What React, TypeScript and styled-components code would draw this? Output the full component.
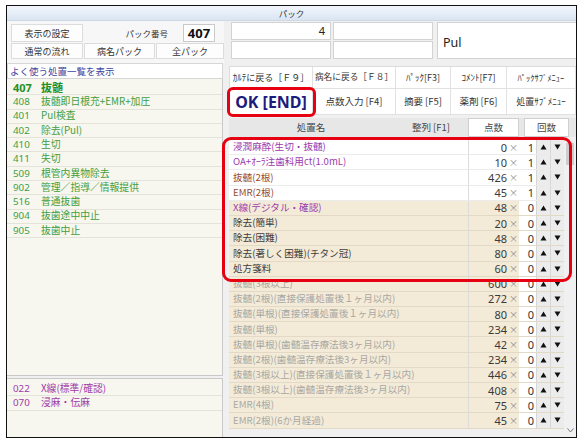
import React from 'react';
import styled, { createGlobalStyle, css } from 'styled-components';

type Tone = 'purple' | 'brown' | 'dark' | 'muted';

interface Treatment {
    name: string;
    points: number;
    count: number;
    tone: Tone;
    plain?: boolean;
}

const packItems = [
    { code: '408', name: '抜髄即日根充+EMR+加圧' },
    { code: '401', name: 'Pul検査' },
    { code: '402', name: '除去(Pul)' },
    { code: '410', name: '生切' },
    { code: '411', name: '失切' },
    { code: '509', name: '根管内異物除去' },
    { code: '902', name: '管理／指導／情報提供' },
    { code: '516', name: '普通抜歯' },
    { code: '904', name: '抜歯途中中止' },
    { code: '905', name: '抜歯中止' },
];

const subItems = [
    { code: '022', name: 'X線(標準/確認)' },
    { code: '070', name: '浸麻・伝麻' },
];

const picked: Treatment[] = [
    { name: '浸潤麻酔(生切・抜髄)', points: 0, count: 1, tone: 'purple', plain: true },
    { name: 'OA+ｵｰﾗ注歯科用ct(1.0mL)', points: 10, count: 1, tone: 'purple', plain: true },
    { name: '抜髄(2根)', points: 426, count: 1, tone: 'brown', plain: true },
    { name: 'EMR(2根)', points: 45, count: 1, tone: 'brown', plain: true },
    { name: 'X線(デジタル・確認)', points: 48, count: 0, tone: 'purple' },
    { name: '除去(簡単)', points: 20, count: 0, tone: 'dark' },
    { name: '除去(困難)', points: 48, count: 0, tone: 'dark' },
    { name: '除去(著しく困難)(チタン冠)', points: 80, count: 0, tone: 'dark' },
    { name: '処方箋料', points: 60, count: 0, tone: 'dark' },
];

const others: Treatment[] = [
    { name: '抜髄(3根以上)', points: 600, count: 0, tone: 'muted' },
    { name: '抜髄(2根)(直接保護処置後１ヶ月以内)', points: 272, count: 0, tone: 'muted' },
    { name: '抜髄(単根)(直接保護処置後１ヶ月以内)', points: 80, count: 0, tone: 'muted' },
    { name: '抜髄(単根)', points: 234, count: 0, tone: 'muted' },
    { name: '抜髄(単根)(歯髄温存療法後3ヶ月以内)', points: 42, count: 0, tone: 'muted' },
    { name: '抜髄(2根)(歯髄温存療法後3ヶ月以内)', points: 234, count: 0, tone: 'muted' },
    { name: '抜髄(3根以上)(直接保護処置後１ヶ月以内)', points: 446, count: 0, tone: 'muted' },
    { name: '抜髄(3根以上)(歯髄温存療法後3ヶ月以内)', points: 408, count: 0, tone: 'muted' },
    { name: 'EMR(4根)', points: 75, count: 0, tone: 'muted' },
    { name: 'EMR(2根)(6か月経過)', points: 45, count: 0, tone: 'muted' },
];

const toneColor: Record<Tone, string> = {
    purple: '#9c3aab',
    brown: '#9a4a2c',
    dark: '#3c3c3c',
    muted: '#a9a7a2',
};

const Arrow: React.FC<{ up?: boolean }> = ({ up }) => (
    <svg width='7' height='6' viewBox='0 0 7 6'>
        <polygon points={up ? '3.5,0.5 6.5,5.5 0.5,5.5' : '0.5,0.5 6.5,0.5 3.5,5.5'} fill='#111' />
    </svg>
);

const TreatmentRow: React.FC<{ item: Treatment }> = ({ item }) => (
    <StyledRow $plain={item.plain}>
        <NameCell $tone={item.tone}>{item.name}</NameCell>
        <PointCell>{item.points}</PointCell>
        <TimesCell>×</TimesCell>
        <CountCell>{item.count}</CountCell>
        <StepButton><Arrow up /></StepButton>
        <StepButton><Arrow /></StepButton>
    </StyledRow>
);

const App: React.FC = () => {
    return (
        <>
            <GlobalStyle />
            <Frame>
                <TitleBar>パック</TitleBar>
                <Body>
                    <LeftPane>
                        <Settings>
                            <SettingsRow>
                                <PlainButton $width={72}>表示の設定</PlainButton>
                                <PackLabel>パック番号</PackLabel>
                                <PackNumber>407</PackNumber>
                            </SettingsRow>
                            <SettingsRow>
                                <PlainButton $width={72}>通常の流れ</PlainButton>
                                <PlainButton $width={71}>病名パック</PlainButton>
                                <PlainButton $width={68}>全パック</PlainButton>
                            </SettingsRow>
                        </Settings>
                        <FavLink>よく使う処置一覧を表示</FavLink>
                        <PackList>
                            <ListItem $lead>
                                <Code>407</Code>
                                <span>抜髄</span>
                            </ListItem>
                            {packItems.map(p => (
                                <ListItem key={p.code}>
                                    <Code>{p.code}</Code>
                                    <span>{p.name}</span>
                                </ListItem>
                            ))}
                        </PackList>
                        <SubList>
                            {subItems.map(p => (
                                <ListItem key={p.code} $purple>
                                    <Code>{p.code}</Code>
                                    <span>{p.name}</span>
                                </ListItem>
                            ))}
                        </SubList>
                    </LeftPane>

                    <RightPane>
                        <InfoRow>
                            <FieldGrid>
                                <Field>4</Field>
                                <Field />
                                <Field />
                                <Field />
                            </FieldGrid>
                            <NameField>Pul</NameField>
                        </InfoRow>

                        <ButtonGrid>
                            <ActionButton $size={9}>ｶﾙﾃに戻る［Ｆ９］</ActionButton>
                            <ActionButton $size={8.7}>病名に戻る［Ｆ８］</ActionButton>
                            <ActionButton $size={9}>ﾊﾟｯｸ[F3]</ActionButton>
                            <ActionButton $size={9}>ｺﾒﾝﾄ[F7]</ActionButton>
                            <ActionButton $size={8.5}>ﾊﾟｯｸｻﾌﾞﾒﾆｭｰ</ActionButton>
                            <OkButton>OK [END]</OkButton>
                            <ActionButton>点数入力 [F4]</ActionButton>
                            <ActionButton>摘要 [F5]</ActionButton>
                            <ActionButton>薬剤 [F6]</ActionButton>
                            <ActionButton $size={9}>処置ｻﾌﾞﾒﾆｭｰ</ActionButton>
                        </ButtonGrid>

                        <HeaderRow>
                            <HeadCell $width={164}>処置名</HeadCell>
                            <HeadCell $width={72} style={{ marginLeft: 2 }}>整列 [F1]</HeadCell>
                            <HeadBox $width={51} style={{ marginLeft: 1 }}>点数</HeadBox>
                            <HeadBox $width={45} style={{ marginLeft: 5 }}>回数</HeadBox>
                        </HeaderRow>

                        <TableArea>
                            <Rows>
                                <Highlight>
                                    {picked.map(t => <TreatmentRow key={t.name} item={t} />)}
                                </Highlight>
                                {others.map(t => <TreatmentRow key={t.name} item={t} />)}
                            </Rows>
                            <ScrollBar>
                                <Thumb />
                                <ScrollArrow>
                                    <svg width='7' height='5' viewBox='0 0 7 5'>
                                        <polyline points='0.5,0.5 3.5,4 6.5,0.5' fill='none' stroke='#777' strokeWidth='1' />
                                    </svg>
                                </ScrollArrow>
                            </ScrollBar>
                        </TableArea>
                    </RightPane>
                </Body>
            </Frame>
        </>
    );
};

export default App;

const GlobalStyle = createGlobalStyle`
    html, body {
        margin: 0;
        padding: 0;
        background: #fff;
    }
    body {
        font-family: "Noto Sans CJK JP", "Noto Sans", sans-serif;
        color: #333;
    }
    * {
        box-sizing: border-box;
    }
`;

const Frame = styled.div`
    margin: 5px 0 0 6px;
    width: 571px;
    height: 433px;
    border: 1px solid #111;
    background: #f0f0f0;
    display: flex;
    flex-direction: column;
`;

const TitleBar = styled.div`
    height: 15px;
    line-height: 15px;
    text-align: center;
    font-size: 8.5px;
    color: #333;
    background: linear-gradient(to bottom, #f2f6fb, #dae5f3);
    border-bottom: 1px solid #cfd9e6;
`;

const Body = styled.div`
    flex: 1;
    display: flex;
    min-height: 0;
`;

const LeftPane = styled.div`
    width: 217px;
    display: flex;
    flex-direction: column;
`;

const Settings = styled.div`
    height: 42px;
    padding: 3px 0 0 4px;
    display: flex;
    flex-direction: column;
    gap: 1px;
    background: #f7f7f7;
`;

const SettingsRow = styled.div`
    display: flex;
    align-items: center;
    gap: 1px;
    height: 18px;
    &:last-child {
        height: 16px;
    }
`;

const PlainButton = styled.div<{ $width: number }>`
    width: ${p => p.$width}px;
    height: 100%;
    display: flex;
    align-items: center;
    justify-content: center;
    background: #fdfdfd;
    border: 1px solid #dcdcdc;
    font-size: 9px;
    line-height: 1;
    color: #333;
    white-space: nowrap;
`;

const PackLabel = styled.div`
    margin-left: auto;
    font-size: 8.5px;
    line-height: 1;
    color: #333;
`;

const PackNumber = styled.div`
    margin: 0 9px 0 14px;
    width: 32px;
    height: 18px;
    display: flex;
    align-items: center;
    justify-content: center;
    background: #fff;
    border: 1px solid #c9c9c9;
    font-family: "Noto Sans", sans-serif;
    font-weight: 700;
    font-size: 13px;
    color: #111;
`;

const FavLink = styled.div`
    width: 216px;
    height: 16px;
    padding-left: 2px;
    line-height: 14px;
    font-size: 9.5px;
    color: #3b45a0;
    background: #fff;
    border: 1px solid #d6d6d6;
`;

const PackList = styled.div`
    width: 216px;
    height: 297px;
    padding-top: 2px;
    background: #f7f6ef;
    border-right: 1px solid #c9c9c9;
    border-bottom: 1px solid #c9c9c9;
`;

const SubList = styled.div`
    flex: 1;
    width: 216px;
    margin-top: 2px;
    padding-top: 3px;
    background: #f7f6ef;
    border-top: 1px solid #c9c9c9;
    border-right: 1px solid #c9c9c9;
`;

const ListItem = styled.div<{ $lead?: boolean; $purple?: boolean }>`
    height: 14.3px;
    display: flex;
    align-items: center;
    font-size: 9.8px;
    line-height: 1;
    color: ${p => (p.$purple ? '#a03ba9' : '#3f9e3f')};
    border-bottom: 1px solid #e4e3da;
    white-space: nowrap;
    ${p => p.$lead && css`
        font-size: 11px;
        font-weight: 700;
        color: #249024;
    `}
`;

const Code = styled.span`
    width: 34px;
    padding-left: 6px;
    font-family: "Noto Sans", sans-serif;
`;

const RightPane = styled.div`
    flex: 1;
    padding-left: 5px;
    display: flex;
    flex-direction: column;
    min-width: 0;
`;

const InfoRow = styled.div`
    margin: 1px 0 0 2px;
    height: 37px;
    display: flex;
`;

const FieldGrid = styled.div`
    display: grid;
    grid-template-columns: 100px 100px;
    grid-template-rows: 18px 18px;
    gap: 1px 2px;
`;

const Field = styled.div`
    background: #fff;
    border: 1px solid #d3d3d3;
    padding-right: 5px;
    text-align: right;
    font-family: "Noto Sans", sans-serif;
    font-size: 11px;
    line-height: 16px;
    color: #222;
`;

const NameField = styled.div`
    flex: 1;
    margin-left: 4px;
    display: flex;
    align-items: center;
    padding: 4px 0 0 5px;
    background: #fff;
    border: 1px solid #d3d3d3;
    border-right: none;
    font-family: "Noto Sans", sans-serif;
    font-size: 12.5px;
    color: #222;
`;

const ButtonGrid = styled.div`
    margin-top: 7px;
    display: grid;
    grid-template-columns: 83px 83px 55px 56px 1fr;
    grid-template-rows: 22px 26px;
    background: #fff;
    border-top: 1px solid #dcdcdc;
    border-left: 1px solid #dcdcdc;
`;

const ActionButton = styled.div<{ $size?: number }>`
    display: flex;
    align-items: center;
    justify-content: center;
    background: #fff;
    border-right: 1px solid #e1e1e1;
    border-bottom: 1px solid #e1e1e1;
    font-size: ${p => p.$size ?? 9.5}px;
    line-height: 1;
    color: #333;
    white-space: nowrap;
    overflow: hidden;
`;

const OkButton = styled(ActionButton)`
    position: relative;
    overflow: visible;
    font-family: "Noto Sans", sans-serif;
    font-weight: 700;
    font-size: 16px;
    color: #1c1c7c;
    &::after {
        content: '';
        position: absolute;
        top: -2px;
        left: -3px;
        right: -4px;
        bottom: -3px;
        border: 3px solid #e60012;
        border-radius: 6px;
        pointer-events: none;
    }
`;

const HeaderRow = styled.div`
    margin-top: 3px;
    height: 19px;
    display: flex;
    background: #e7e7e7;
`;

const HeadCell = styled.div<{ $width: number }>`
    width: ${p => p.$width}px;
    display: flex;
    align-items: center;
    justify-content: center;
    font-size: 9.5px;
    line-height: 1;
    color: #444;
`;

const HeadBox = styled(HeadCell)`
    background: #fff;
    border: 1px solid #cfcfcf;
`;

const TableArea = styled.div`
    flex: 1;
    display: flex;
    padding-top: 3px;
    min-height: 0;
`;

const Rows = styled.div`
    flex: 1;
    display: flex;
    flex-direction: column;
`;

const Highlight = styled.div`
    position: relative;
    &::after {
        content: '';
        position: absolute;
        top: -3px;
        left: -7px;
        right: -8px;
        bottom: -5px;
        border: 3px solid #e60012;
        border-radius: 9px;
        pointer-events: none;
        z-index: 2;
    }
`;

const StyledRow = styled.div<{ $plain?: boolean }>`
    height: 15.2px;
    display: flex;
    background: ${p => (p.$plain ? '#fff' : '#f3ebd8')};
    border-bottom: 1px solid ${p => (p.$plain ? '#ebebeb' : '#e2dac6')};
    font-size: 9.6px;
    line-height: 1;
`;

const NameCell = styled.div<{ $tone: Tone }>`
    flex: 1;
    display: flex;
    align-items: center;
    padding-left: 4px;
    color: ${p => toneColor[p.$tone]};
    white-space: nowrap;
    overflow: hidden;
    border-right: 1px solid #dcdcdc;
`;

const PointCell = styled.div`
    width: 40px;
    display: flex;
    align-items: center;
    justify-content: flex-end;
    padding-right: 2px;
    font-family: "Noto Sans", sans-serif;
    font-size: 11px;
    color: #3a3a3a;
`;

const TimesCell = styled.div`
    width: 10px;
    display: flex;
    align-items: center;
    font-size: 9px;
    color: #8a8a8a;
`;

const CountCell = styled.div`
    width: 17px;
    display: flex;
    align-items: center;
    justify-content: flex-end;
    padding-right: 2px;
    background: #fff;
    font-family: "Noto Sans", sans-serif;
    font-size: 11px;
    color: #333;
`;

const StepButton = styled.div`
    width: 14px;
    display: flex;
    align-items: center;
    justify-content: center;
    background: #ececec;
    border-left: 1px solid #d6d6d6;
`;

const ScrollBar = styled.div`
    width: 12px;
    display: flex;
    flex-direction: column;
    align-items: center;
    background: #f0f0f0;
`;

const Thumb = styled.div`
    margin-top: 3px;
    width: 8px;
    height: 22px;
    background: #cdcdcd;
`;

const ScrollArrow = styled.div`
    margin-top: auto;
    margin-bottom: 4px;
    display: flex;
`;
